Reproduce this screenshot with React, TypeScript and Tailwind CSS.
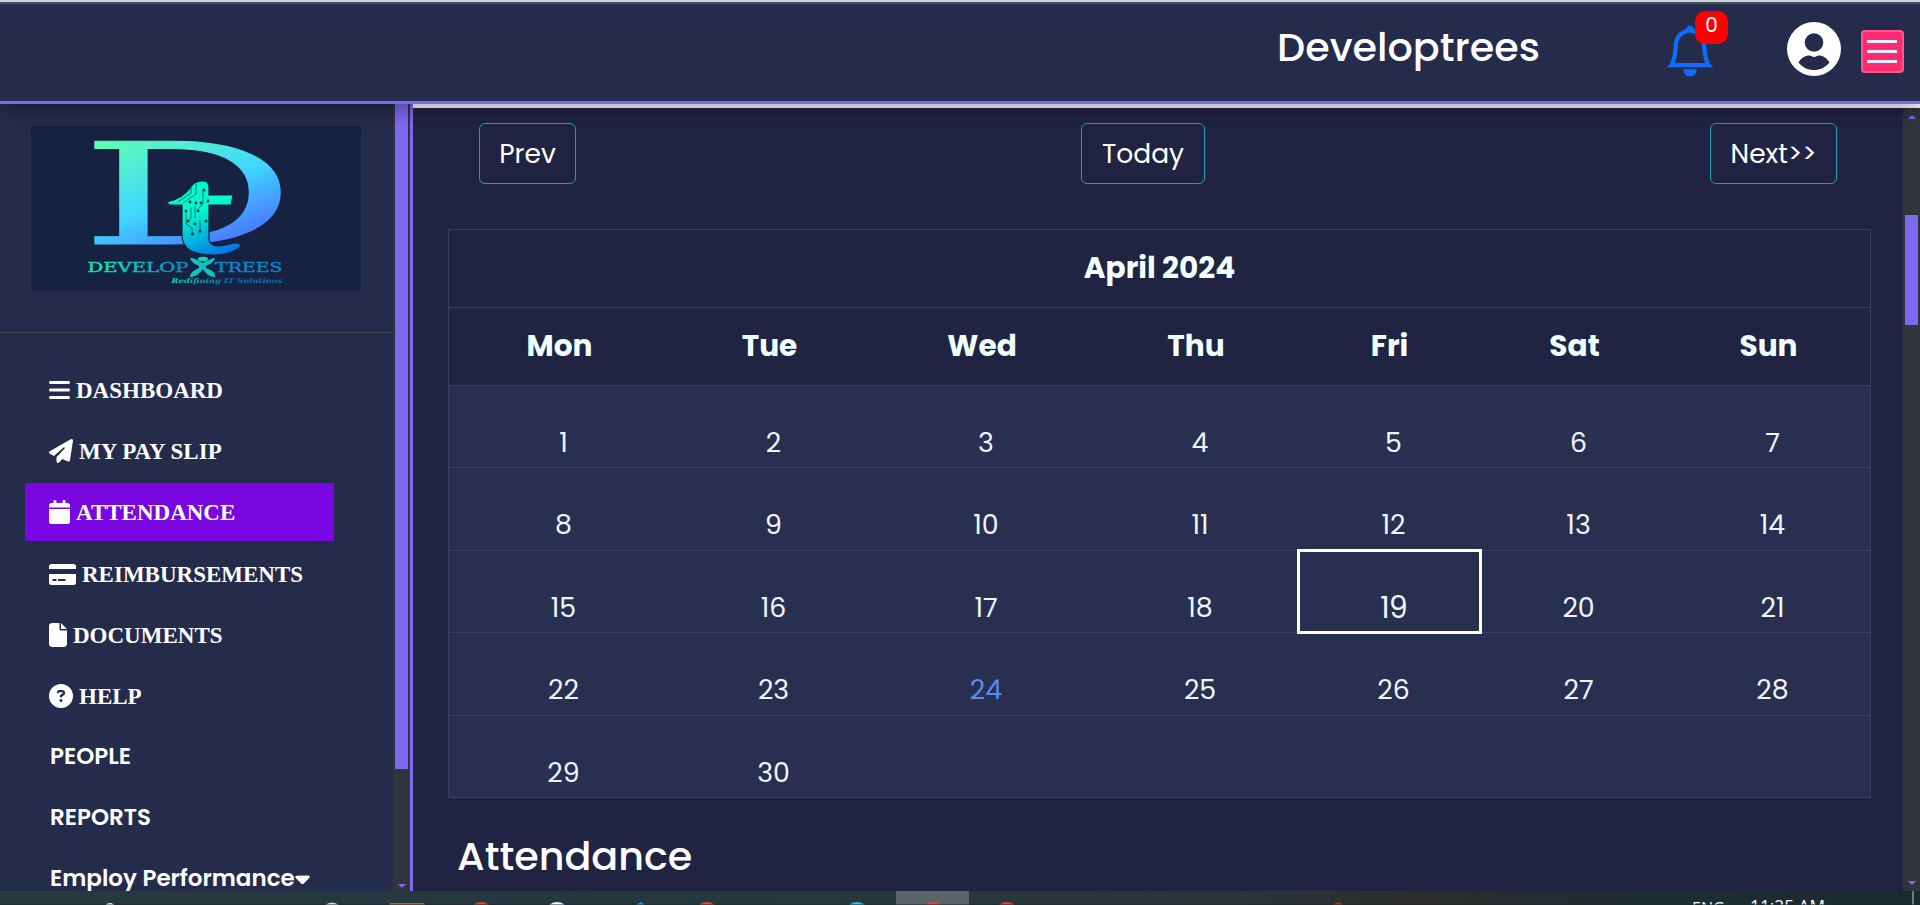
import type { ReactNode } from "react";
import { BsBell } from "react-icons/bs";
import {
  FaBars,
  FaPaperPlane,
  FaCalendar,
  FaFile,
  FaCircleQuestion,
  FaCaretDown,
} from "react-icons/fa6";

const SANS = "font-['Poppins','Inter',sans-serif]";
const SERIF = "font-['Liberation_Serif',serif] font-bold text-[23px]";

function Logo() {
  return (
    <svg width="330" height="165" viewBox="31 126 330 165" className="block bg-[#172142]">
      <defs>
        <linearGradient id="mark" gradientUnits="userSpaceOnUse" x1="8" y1="-100" x2="92" y2="10">
          <stop offset="0" stopColor="#5effb4" />
          <stop offset="0.5" stopColor="#3fd6ff" />
          <stop offset="0.85" stopColor="#4a7dff" />
        </linearGradient>
        <linearGradient id="stem" gradientUnits="userSpaceOnUse" x1="185" y1="181" x2="215" y2="256">
          <stop offset="0.4" stopColor="#00fbc9" />
          <stop offset="1" stopColor="#0277ea" />
        </linearGradient>
        <linearGradient id="word" gradientUnits="userSpaceOnUse" x1="88" y1="0" x2="282" y2="0">
          <stop offset="0.1" stopColor="#0fe3b8" />
          <stop offset="0.5" stopColor="#0a87c4" />
          <stop offset="1" stopColor="#0b82c8" />
        </linearGradient>
        <linearGradient id="tag" gradientUnits="userSpaceOnUse" x1="172" y1="0" x2="282" y2="0">
          <stop offset="0" stopColor="#0fd5b0" />
          <stop offset="0.5" stopColor="#0a76b0" />
          <stop offset="1" stopColor="#0a6cab" />
        </linearGradient>
      </defs>
      <g transform="translate(80.500 244) scale(1.9 1)">
        <text fontFamily="DejaVu Serif" fontSize="141" fill="url(#mark)" stroke="url(#mark)" strokeWidth="1">D</text>
      </g>
      <path
        d="M167 202c10-2 18-7 23-14 3-5 7-7 12-7 5 0 7 2 7 6v8h24l-2 10h-22v33c0 5 3 8 9 8 8 0 12-3 18-3 5 0 6 3 3 5-5 4-15 7-24 7-19 0-33-4-33-20v-30h-13z"
        fill="url(#stem)"
        stroke="#172142"
        strokeWidth="1.200"
      />
      <g fill="none" stroke="#0a5a66" strokeWidth="0.8">
        <path d="M178 202l13-9v-8M183 203l13-9v-10M186 210v14l6 4v7M191 207v11l-5 6M195 206v12M197 210l6-6v-15M200 220v12" />
      </g>
      <g fill="#10394f">
        <circle cx="192.500" cy="234" r="1.600" /><circle cx="200" cy="231" r="1.500" /><circle cx="206" cy="221" r="1.500" />
        <circle cx="186" cy="211" r="1.400" /><circle cx="198" cy="211" r="1.400" /><circle cx="190" cy="202" r="1.400" />
        <circle cx="196" cy="203" r="1.400" /><circle cx="204" cy="190" r="1.400" /><circle cx="201" cy="203" r="1.400" />
        <circle cx="188" cy="221" r="1.400" /><circle cx="195" cy="224" r="1.400" /><circle cx="208" cy="201" r="1.400" />
      </g>
      <g fontFamily="DejaVu Serif" fontSize="12.500" fill="url(#word)" stroke="url(#word)" strokeWidth="0.4">
        <text x="87.500" y="272" textLength="101" lengthAdjust="spacingAndGlyphs">DEVELOP</text>
        <text x="215" y="272" textLength="67.500" lengthAdjust="spacingAndGlyphs">TREES</text>
      </g>
      <ellipse cx="203" cy="259" rx="5" ry="2.300" fill="#08dcc0" />
      <path d="M190 258c5 0 9 3 13 5 4-2 8-5 12-5-1 4-5 6-9 8v2c6 2 10 5 9 9-6 0-10-4-12-8-3 4-7 8-13 8 0-4 4-7 9-9v-2c-4-2-8-4-9-8z" fill="#0cc4c4" />
      <text x="171.500" y="282.500" fontFamily="DejaVu Serif" fontStyle="italic" fontWeight="bold" fontSize="6.500" fill="url(#tag)" textLength="111" lengthAdjust="spacingAndGlyphs">
        Redifining IT Solutions
      </text>
    </svg>
  );
}

function CardIcon() {
  return (
    <svg width="27" height="21" viewBox="0 0 27 21" className="shrink-0" fill="#fff">
      <path d="M2.500 0h22A2.500 2.500 0 0 1 27 2.500V5H0V2.500A2.500 2.500 0 0 1 2.500 0z" />
      <path fillRule="evenodd" d="M0 10h27v8.500a2.500 2.500 0 0 1-2.500 2.500h-22A2.500 2.500 0 0 1 0 18.500zM3.500 15v2h4v-2zM9 15v2h7.500v-2z" />
    </svg>
  );
}

function NavItem({ icon, label, active, serif = true, caret }: { icon?: ReactNode; label: string; active?: boolean; serif?: boolean; caret?: boolean }) {
  return (
    <a className={`ml-[25px] flex h-[58px] w-[309px] shrink-0 items-center whitespace-nowrap pl-6 text-white ${active ? "bg-[#7a07e2]" : ""}`}>
      {icon}
      <span className={serif ? `${SERIF} ml-1.5 pt-0.5` : `${SANS} ml-px text-[23px] font-semibold`}>{label}</span>
      {caret && <FaCaretDown className="shrink-0" size={23} viewBox="0 0 320 512" style={{ width: 15 }} />}
    </a>
  );
}

function Triangle({ up }: { up?: boolean }) {
  return (
    <svg width="8" height="4" viewBox="0 0 8 4" className="block shrink-0">
      <path d={up ? "M0 4L4 0L8 4z" : "M0 0L4 4L8 0z"} fill="#7e68ef" />
    </svg>
  );
}

const DAYS = ["Mon", "Tue", "Wed", "Thu", "Fri", "Sat", "Sun"];
const ROW_HEIGHTS = ["h-[82px]", "h-[83px]", "h-[82px]", "h-[83px]", "h-[82px]"];
const COLS = "grid grid-cols-[221px_199px_226px_202px_185px_185px_203px]";

function Calendar() {
  return (
    <div className="ml-[33px] mt-[45px] w-[1423px] border border-b-0 border-[#3a3f60]">
      <div className="flex h-[78px] items-center justify-center border-b border-[#3a3f60] pb-px text-[29.600px] font-bold text-[#f0ffff]">
        April 2024
      </div>
      <div className={`${COLS} h-[78px] border-b border-[#3a3f60]`}>
        {DAYS.map((d) => (
          <div key={d} className="flex items-center justify-center text-[29.600px] font-bold text-[#f0ffff]">{d}</div>
        ))}
      </div>
      {ROW_HEIGHTS.map((h, r) => (
        <div key={r} className={`${COLS} ${h} border-b border-[#3a3f60] bg-[#292f51]`}>
          {DAYS.map((d, c) => {
            const n = r * 7 + c + 1;
            const today = n === 19;
            return (
              <div key={d} className={`flex items-center justify-center pl-2 pt-[33px] ${today ? "-mb-0.5 -mt-0.5 text-[29.600px] tracking-[-0.8px] outline-3 -outline-offset-3 outline-white" : "text-[26.800px]"} ${n === 24 ? "text-[#5b8def]" : "text-[#f0f6ff]"}`}>
                {n <= 30 ? n : ""}
              </div>
            );
          })}
        </div>
      ))}
    </div>
  );
}

function NavButton({ label, width }: { label: string; width: string }) {
  return (
    <button className={`flex h-[61px] items-center justify-center rounded-[6px] border border-[#17a2b8] pt-px text-[26.500px] text-white ${width}`}>
      {label}
    </button>
  );
}

function Taskbar() {
  return (
    <div className="relative h-[14px] shrink-0 overflow-hidden bg-[linear-gradient(90deg,#28393f_0%,#243740_30%,#27373b_50%,#2b3437_65%,#2d2c2b_74%,#1d2d34_85%,#1a2b30_100%)]">
      <svg width="1920" height="14" className="absolute left-0 top-0">
        <rect x="896" y="0" width="73" height="14" fill="#59656a" />
        <circle cx="110" cy="17.500" r="5.500" fill="#fff" />
        <circle cx="332" cy="22" r="10.500" fill="#d9d9d9" />
        <rect x="389" y="12" width="36" height="6" rx="2" fill="#b8621f" />
        <circle cx="481" cy="23" r="12" fill="#ea4335" />
        <circle cx="557" cy="23" r="12" fill="#f4f4f4" />
        <path d="M636 14l5-3l4 3z" fill="#1b9ae8" />
        <circle cx="707" cy="23" r="12" fill="#ea4335" />
        <circle cx="857" cy="23" r="12" fill="#24c3df" />
        <circle cx="933" cy="23" r="12" fill="#ea4335" />
        <circle cx="1007" cy="23" r="12" fill="#ea4335" />
        <circle cx="1338" cy="18" r="6.500" fill="#c5281c" />
        <rect x="1912" y="0" width="2" height="14" fill="#6f7b80" />
      </svg>
      <span className="absolute left-[1692px] top-[7px] font-['Open_Sans',sans-serif] text-[16px] leading-[20px] text-white">ENG</span>
      <span className="absolute left-[1750px] top-[6px] whitespace-nowrap font-['Open_Sans',sans-serif] text-[17.300px] leading-[20px] text-white">11:25 AM</span>
      <div className="absolute bottom-0 left-0 h-px w-full bg-[#1d2426]/50" />
    </div>
  );
}

export default function App() {
  return (
    <div className={`${SANS} flex h-[905px] w-[1920px] flex-col overflow-hidden bg-[#202341]`}>
      <header className="relative z-10 flex h-[104px] shrink-0 justify-end border-b-[3px] border-[#7e68ef] bg-[#252b4b] pr-4 shadow-[0_8px_16px_rgba(0,0,0,0.28)]">
        <div className="absolute left-0 top-0 h-1 w-full border-b-2 border-t-2 border-b-[#46505c] border-t-[#cfd2d2]" />
        <h1 className="mt-[23px] h-12 w-[388px] text-[39.700px] font-medium leading-[48px] text-white">Developtrees</h1>
        <div className="relative mt-[26px] h-[50px] w-[50px]">
          <BsBell size={50} color="#0d6efd" strokeWidth={0.35} className="overflow-visible" />
          <span className="absolute -top-[15px] left-[30px] flex h-[33px] w-[33px] items-center justify-center rounded-[10px] bg-[#ff0000] pb-[5px] text-[20px] text-white">0</span>
        </div>
        <svg width="54" height="54" viewBox="0 0 54 54" className="ml-[72px] mt-[22px]">
          <circle cx="27" cy="27" r="27" fill="#fff" />
          <circle cx="27" cy="20.500" r="9.300" fill="#252b4b" />
          <path d="M11.500 40.500C14 36 18.500 33.500 22 33.500C24.500 33.500 25 35 27 35C29 35 29.500 33.500 32 33.500C35.500 33.500 40 36 42.500 40.500C38.500 45.500 33 48 27 48C21 48 15.500 45.500 11.500 40.500Z" fill="#252b4b" />
        </svg>
        <button className="ml-5 mt-[30px] flex h-[43px] w-[43px] flex-col items-start justify-center gap-[7px] rounded-[4px] border-2 border-[#ff5a8c] bg-[#ff2a70] pl-1">
          <i className="h-[3px] w-[30px] shrink-0 bg-[#dceeff]" />
          <i className="h-[3px] w-[30px] shrink-0 bg-[#dceeff]" />
          <i className="h-[3px] w-[30px] shrink-0 bg-[#dceeff]" />
        </button>
      </header>

      <div className="flex h-[787px] shrink-0">
        <aside className="flex w-[413px] shrink-0 border-r-[3px] border-[#7e68ef] bg-[#252b4b]">
          <div className="flex w-[393px] flex-col overflow-hidden">
            <div className="h-[229px] shrink-0 border-b border-[#434b55] pl-[31px] pt-[22px]">
              <Logo />
            </div>
            <nav className="flex flex-col gap-[3px] pt-[28px]">
              <NavItem icon={<FaBars size={24} viewBox="0 0 448 512" style={{ width: 21 }} />} label="DASHBOARD" />
              <NavItem icon={<FaPaperPlane size={24} />} label="MY PAY SLIP" />
              <NavItem icon={<FaCalendar size={24} viewBox="0 0 448 512" style={{ width: 21 }} />} label="ATTENDANCE" active />
              <div className="-mb-px flex flex-col gap-[3px] pt-px">
                <NavItem icon={<CardIcon />} label="REIMBURSEMENTS" />
                <NavItem icon={<FaFile size={24} viewBox="0 0 384 512" style={{ width: 18 }} />} label="DOCUMENTS" />
                <NavItem icon={<FaCircleQuestion size={24} />} label="HELP" />
              </div>
              <NavItem label="PEOPLE" serif={false} />
              <NavItem label="REPORTS" serif={false} />
              <NavItem label="Employ Performance" serif={false} caret />
            </nav>
          </div>
          <div className="flex w-[17px] flex-col items-center bg-[#2f343d]">
            <div className="h-[665px] w-[13px] shrink-0 bg-[#7e68ef]" />
            <div className="mt-[115px]"><Triangle /></div>
          </div>
        </aside>

        <main className="flex min-w-0 flex-1 flex-col">
          <div className="h-1 shrink-0 bg-white" />
          <div className="flex flex-1 overflow-hidden">
            <section className="w-[1490px] shrink-0 border-l-2 border-[#262933]">
              <div className="ml-[64px] mt-[15px] flex w-[1358px] justify-between">
                <NavButton label="Prev" width="w-[97px]" />
                <NavButton label="Today" width="w-[124px]" />
                <NavButton label="Next>>" width="w-[127px]" />
              </div>
              <Calendar />
              <h2 className="ml-[42px] mt-[34px] text-[39.700px] font-medium leading-[48px] text-white">Attendance</h2>
            </section>
            <div className="flex w-[17px] flex-col items-center bg-[#2f343d]">
              <div className="mt-[7px]"><Triangle up /></div>
              <div className="mt-[96px] h-[110px] w-[13px] shrink-0 bg-[#7e68ef]" />
              <div className="mt-[556px]"><Triangle /></div>
            </div>
          </div>
        </main>
      </div>
      <Taskbar />
    </div>
  );
}
